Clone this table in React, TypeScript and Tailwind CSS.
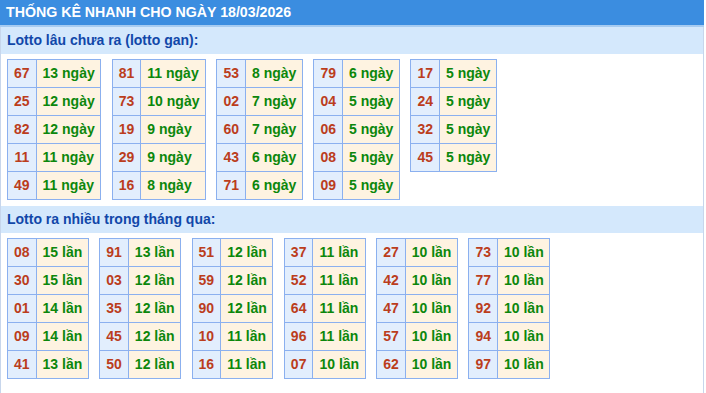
import React from 'react';

const ganTables: [string, number][][] = [
  [['67', 13], ['25', 12], ['82', 12], ['11', 11], ['49', 11]],
  [['81', 11], ['73', 10], ['19', 9], ['29', 9], ['16', 8]],
  [['53', 8], ['02', 7], ['60', 7], ['43', 6], ['71', 6]],
  [['79', 6], ['04', 5], ['06', 5], ['08', 5], ['09', 5]],
  [['17', 5], ['24', 5], ['32', 5], ['45', 5]],
];

const nhieuTables: [string, number][][] = [
  [['08', 15], ['30', 15], ['01', 14], ['09', 14], ['41', 13]],
  [['91', 13], ['03', 12], ['35', 12], ['45', 12], ['50', 12]],
  [['51', 12], ['59', 12], ['90', 12], ['10', 11], ['16', 11]],
  [['37', 11], ['52', 11], ['64', 11], ['96', 11], ['07', 10]],
  [['27', 10], ['42', 10], ['47', 10], ['57', 10], ['62', 10]],
  [['73', 10], ['77', 10], ['92', 10], ['94', 10], ['97', 10]],
];

const StatTable = ({ rows, unit }: { rows: [string, number][]; unit: string }) => (
  <div className="inline-grid grid-cols-[auto_auto] border-l border-t border-[#8bb0ef]">
    {rows.map(([num, count]) => (
      <React.Fragment key={num}>
        <div className="h-[28px] px-[6px] flex items-center justify-center bg-[#e2eefd] border-r border-b border-[#8bb0ef] text-[#bb3d1c]">
          {num}
        </div>
        <div className="h-[28px] pl-[6px] pr-[5.5px] flex items-center bg-[#fef3e1] border-r border-b border-[#8bb0ef] text-[#0c870c] whitespace-nowrap">
          {count} {unit}
        </div>
      </React.Fragment>
    ))}
  </div>
);

const SectionTitle = ({ children }: { children: React.ReactNode }) => (
  <div className="h-[27px] px-[6px] flex items-center bg-[#d4e8fc] text-[#1147a9] font-bold text-[14px]">
    {children}
  </div>
);

export default function App() {
  return (
    <div className="w-[704px] min-h-screen bg-white font-['Liberation_Sans',Arial,sans-serif]">
      <div className="h-[27px] bg-[#3b8de0] border-b-2 border-[#a6cbf1] px-[6px] flex items-center text-white font-bold text-[14.2px] uppercase">
        Thống kê nhanh cho ngày 18/03/2026
      </div>
      <div className="border-l border-r border-[#c7d6ec] min-h-[366px]">
        <SectionTitle>Lotto lâu chưa ra (lotto gan):</SectionTitle>
        <div className="flex items-start gap-[10.5px] px-[6px] pt-[5px] pb-[6px] font-bold text-[14px]">
          {ganTables.map((t, i) => (
            <StatTable key={i} rows={t} unit="ngày" />
          ))}
        </div>
        <SectionTitle>Lotto ra nhiều trong tháng qua:</SectionTitle>
        <div className="flex items-start gap-[10.5px] px-[6px] pt-[5px] pb-[6px] font-bold text-[14px]">
          {nhieuTables.map((t, i) => (
            <StatTable key={i} rows={t} unit="lần" />
          ))}
        </div>
      </div>
    </div>
  );
}
